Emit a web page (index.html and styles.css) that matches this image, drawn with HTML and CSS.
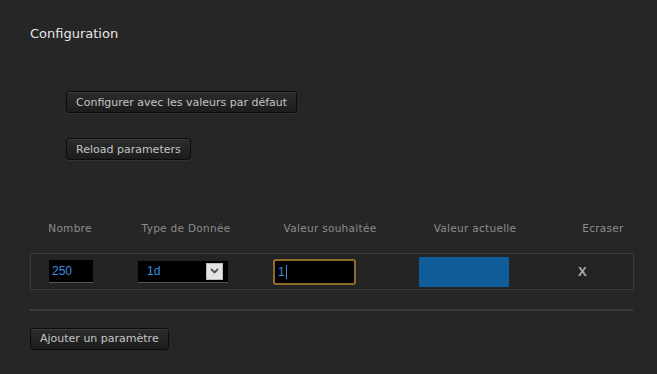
FILE: index.html
```html
<!DOCTYPE html>
<html lang="fr">
<head>
  <meta charset="UTF-8" />
  <title>Configuration</title>
  <link rel="stylesheet" href="styles.css">
</head>
<body>
<div class="page">
  <h1 class="title">Configuration</h1>

  <div class="actions">
    <button class="btn">Configurer avec les valeurs par défaut</button>
    <button class="btn">Reload parameters</button>
  </div>

  <div class="params">
    <div class="params-head">
      <span class="col c1">Nombre</span>
      <span class="col c2">Type de Donnée</span>
      <span class="col c3">Valeur souhaitée</span>
      <span class="col c4">Valeur actuelle</span>
      <span class="col c5">Ecraser</span>
    </div>
    <div class="param-row">
      <input class="num-input" type="text" value="250" />
      <div class="type-select">
        <span>1d</span>
        <span class="arrow">
          <svg width="9" height="6" viewBox="0 0 9 6"><path d="M1 1 L4.5 4.5 L8 1" fill="none" stroke="#555" stroke-width="1.8"/></svg>
        </span>
      </div>
      <div class="val-input">1<span class="caret"></span></div>
      <div class="current-val"></div>
      <span class="erase">X</span>
    </div>
  </div>

  <hr class="sep" />

  <button class="btn">Ajouter un paramètre</button>
</div>
</body>
</html>
```

FILE: styles.css
```css
body {
  margin: 0;
  background: #262626;
  font-family: "DejaVu Sans", Verdana, sans-serif;
  color: #c8c8c8;
}
.page {
  padding: 26px 0 0 30px;
}
.title {
  margin: 0;
  font-size: 13px;
  font-weight: normal;
  color: #e6e6e6;
  line-height: 15px;
}
.actions {
  display: flex;
  flex-direction: column;
  align-items: flex-start;
  gap: 25px;
  margin: 50px 0 0 36px;
}
.btn {
  font-family: "DejaVu Sans", Verdana, sans-serif;
  font-size: 11px;
  color: #c4c4c4;
  height: 22px;
  padding: 0 9px;
  background: linear-gradient(#2c2c2c, #1c1c1c);
  border: 1px solid #0c0c0c;
  border-radius: 3px;
  box-shadow: inset 0 1px 0 #3c3c3c, 0 1px 0 #333;
  cursor: pointer;
}
.params {
  margin-top: 61px;
}
.params-head {
  display: flex;
  font-size: 10.5px;
  letter-spacing: 0.3px;
  color: #8c8c8c;
  height: 14px;
  line-height: 14px;
}
.col {
  text-align: center;
}
.c1 { width: 80px; }
.c2 { width: 152px; }
.c3 { width: 136px; }
.c4 { width: 154px; }
.c5 { width: 102px; }
.param-row {
  display: flex;
  align-items: center;
  width: 602px;
  height: 35px;
  margin-top: 18px;
  border: 1px solid #3a3a3a;
  background: #232323;
}
.num-input {
  margin-left: 18px;
  width: 41px;
  height: 22px;
  padding: 0 0 0 3px;
  border: none;
  border-bottom: 1px solid #555;
  background: #000;
  color: #3d8fe0;
  font-family: "Liberation Sans", Arial, sans-serif;
  font-size: 12px;
  outline: none;
}
.type-select {
  display: flex;
  align-items: center;
  justify-content: space-between;
  margin-left: 45px;
  width: 90px;
  height: 22px;
  box-sizing: border-box;
  padding: 0 5px 0 9px;
  background: #000;
  border-bottom: 1px solid #555;
  color: #3d8fe0;
  font-family: "Liberation Sans", Arial, sans-serif;
  font-size: 12px;
}
.arrow {
  display: flex;
  align-items: center;
  justify-content: center;
  width: 17px;
  height: 17px;
  background: #e4e4e4;
  border: 1px solid #bbb;
  box-sizing: border-box;
}
.val-input {
  display: flex;
  align-items: center;
  margin-left: 45px;
  width: 83px;
  height: 26px;
  box-sizing: border-box;
  padding-left: 3px;
  background: #000;
  border: 2px solid #8e6a2c;
  border-radius: 3px;
  color: #3d8fe0;
  font-family: "Liberation Sans", Arial, sans-serif;
  font-size: 12px;
}
.caret {
  display: inline-block;
  width: 1px;
  height: 14px;
  background: #3d8fe0;
  margin-left: 1px;
}
.current-val {
  margin-left: 63px;
  width: 90px;
  height: 30px;
  background: #0f5c99;
}
.erase {
  margin-left: 69px;
  font-family: "Liberation Sans", Arial, sans-serif;
  font-size: 13px;
  font-weight: bold;
  color: #aaa;
}
.sep {
  width: 603px;
  margin: 19px 0 16px 0;
  border: none;
  border-top: 2px solid #3c3c3c;
}
```
